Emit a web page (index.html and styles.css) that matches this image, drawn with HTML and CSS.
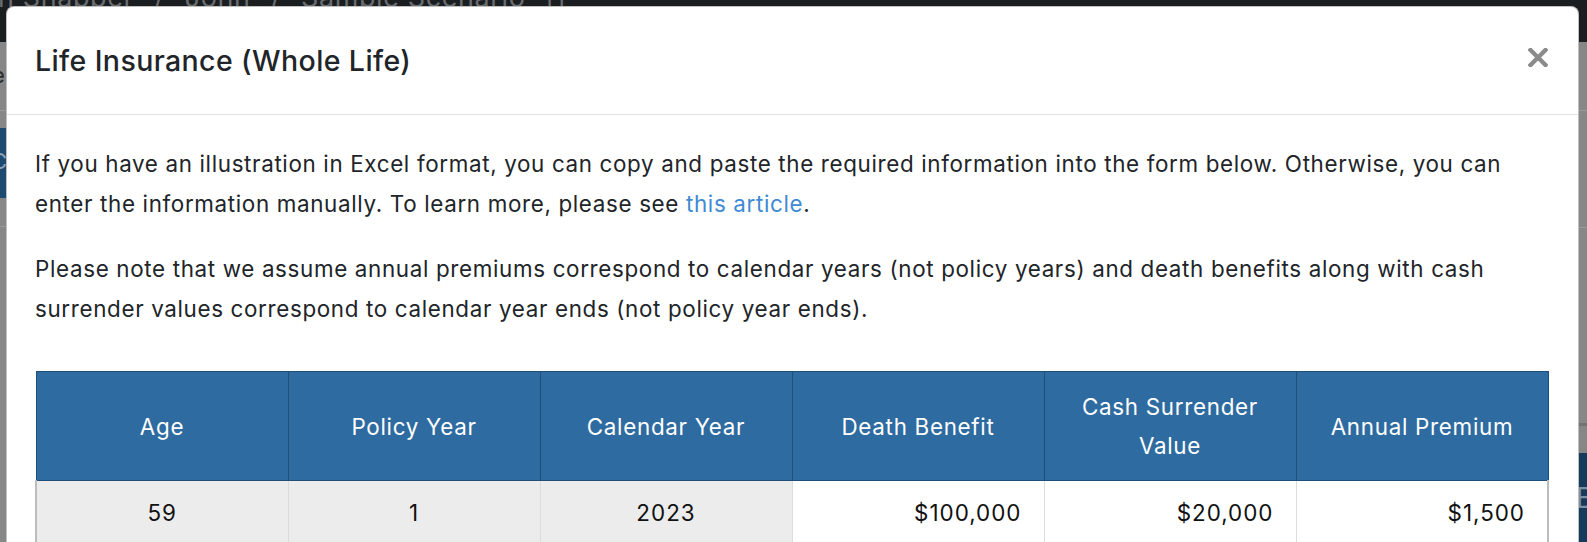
FILE: index.html
```html
<!DOCTYPE html>
<html lang="en">
<head>
<meta charset="utf-8">
<title>Life Insurance (Whole Life)</title>
<link rel="stylesheet" href="styles.css">
</head>
<body>
<div class="page">
  <div class="topbar">
    <div class="crumbs">
      <span>n Snapper</span><span class="sep">/</span><span>John</span><span class="sep">/</span><span>Sample Scenario</span><span class="ico">[]</span><span class="ico">&mdash;</span>
    </div>
  </div>
  <div class="bg-main">
    <div class="bg-left">
      <div class="bl-row1"><span class="bl-e">e</span></div>
      <div class="bl-btn"><span class="bl-c">C</span></div>
      <div class="bl-row2"></div>
    </div>
    <div class="bg-right">
      <div class="br-row1"></div>
      <div class="br-row2"></div>
      <div class="br-row3"></div>
      <div class="br-blue"><span class="br-b">B</span></div>
    </div>
  </div>
</div>

<div class="modal">
  <div class="modal-header">
    <h4 class="modal-title">Life Insurance (Whole Life)</h4>
    <button class="close" type="button" aria-label="Close">
      <svg width="20" height="19" viewBox="0 0 20 19"><path d="M2.5 2 L17.5 17 M17.5 2 L2.5 17" stroke="#8b8b8b" stroke-width="4.4" stroke-linecap="square" fill="none"/></svg>
    </button>
  </div>
  <div class="modal-body">
    <p>If you have an illustration in Excel format, you can copy and paste the required information into the form below. Otherwise, you can enter the information manually. To learn more, please see <a href="#">this article</a>.</p>
    <p>Please note that we assume annual premiums correspond to calendar years (not policy years) and death benefits along with cash surrender values correspond to calendar year ends (not policy year ends).</p>
    <table class="grid">
      <thead>
        <tr>
          <th>Age</th>
          <th>Policy Year</th>
          <th>Calendar Year</th>
          <th>Death Benefit</th>
          <th>Cash Surrender Value</th>
          <th>Annual Premium</th>
        </tr>
      </thead>
      <tbody>
        <tr>
          <td class="ro">59</td>
          <td class="ro">1</td>
          <td class="ro">2023</td>
          <td class="num">$100,000</td>
          <td class="num">$20,000</td>
          <td class="num">$1,500</td>
        </tr>
        <tr>
          <td class="ro">60</td>
          <td class="ro">2</td>
          <td class="ro">2024</td>
          <td class="num">$100,000</td>
          <td class="num">$21,500</td>
          <td class="num">$1,500</td>
        </tr>
      </tbody>
    </table>
  </div>
</div>
</body>
</html>
```
FILE: styles.css
```css
html, body {
  margin: 0;
  padding: 0;
  height: 542px;
  overflow: hidden;
}
body {
  position: relative;
  background: #878787;
  font-family: Inter, "Noto Sans", "Liberation Sans", sans-serif;
  color: #212529;
}

/* dimmed page behind the dialog */
.page {
  display: flex;
  flex-direction: column;
}
.topbar {
  height: 42px;
  background: #1b1e21;
  overflow: hidden;
}
.crumbs {
  display: flex;
  align-items: baseline;
  margin-top: -15px;
  margin-left: -2px;
  font-size: 27px;
  line-height: 26px;
  color: #6a6d70;
  white-space: nowrap;
  letter-spacing: 0.6px;
}
.crumbs .sep {
  margin: 0 20px;
}
.crumbs .ico {
  margin-left: 20px;
}
.bg-main {
  display: flex;
  justify-content: space-between;
}
.bg-left, .bg-right {
  width: 40px;
  display: flex;
  flex-direction: column;
}
.bl-row1 {
  height: 68px;
  border-bottom: 1px solid #9a9a9a;
  overflow: hidden;
}
.bl-e {
  display: block;
  margin: 20px 0 0 -8px;
  font-size: 22px;
  line-height: 26px;
  color: #2a2a2a;
}
.bl-btn {
  margin-top: 17px;
  height: 70px;
  background: #1f4a6f;
  overflow: hidden;
}
.bl-c {
  display: block;
  margin: 20px 0 0 -9px;
  font-size: 22px;
  line-height: 26px;
  color: #8aa0b4;
}
.bl-row2 {
  height: 28px;
  border-bottom: 1px solid #9a9a9a;
}
.br-row1 {
  height: 68px;
  border-bottom: 1px solid #9a9a9a;
}
.br-row2 {
  height: 116px;
  border-bottom: 1px solid #9a9a9a;
}
.br-row3 {
  height: 195px;
  border-bottom: 3px solid #727272;
}
.br-blue {
  margin-top: 27px;
  height: 100px;
  background: #163a5c;
  overflow: hidden;
  display: flex;
  justify-content: flex-end;
}
.br-b {
  display: block;
  margin: 30px -7px 0 0;
  font-size: 28px;
  line-height: 30px;
  color: #7d8fa2;
}

/* dialog */
.modal {
  position: absolute;
  top: 6px;
  left: 6px;
  width: 1573px;
  height: 620px;
  box-sizing: border-box;
  background: #fff;
  border: 1px solid rgba(0, 0, 0, 0.25);
  border-radius: 8px;
  overflow: hidden;
}
.modal-header {
  height: 108px;
  box-sizing: border-box;
  border-bottom: 1px solid #e1e3e6;
  padding: 0 30px 0 28px;
  display: flex;
  align-items: center;
  justify-content: space-between;
}
.modal-title {
  margin: 0;
  font-size: 28.5px;
  font-weight: 500;
  line-height: 34px;
  letter-spacing: 0.4px;
  color: #212529;
}
.close {
  border: 0;
  background: none;
  padding: 0;
  margin: -6px 0 0 0;
  width: 20px;
  height: 19px;
  cursor: pointer;
  display: block;
}
.close svg { display: block; }

.modal-body {
  padding: 29px 29px 0 28px;
}
.modal-body p {
  margin: 0 0 26px;
  font-size: 22.4px;
  line-height: 39.5px;
  letter-spacing: 0.65px;
}
.modal-body a {
  color: #3f8ad3;
  text-decoration: none;
}

.grid {
  width: 100%;
  margin-top: 43px;
  border-collapse: collapse;
  table-layout: fixed;
  font-size: 22.4px;
  letter-spacing: 0.7px;
}
.grid th {
  background: #2e6ba0;
  color: #fff;
  font-weight: 400;
  line-height: 39px;
  padding: 15px 24px;
  border: 1px solid #1f4e78;
  text-align: center;
  vertical-align: middle;
}
.grid td {
  line-height: 40px;
  padding: 12px 22px;
  border: 1px solid #dcdcdc;
  color: #111;
  letter-spacing: 1px;
}
.grid tbody tr td:first-child { border-left: 2px solid #bdbdbd; }
.grid tbody tr td:last-child { border-right: 2px solid #bdbdbd; }
.grid td.ro {
  background: #ececec;
  text-align: center;
}
.grid td.num {
  background: #fff;
  text-align: right;
}
```
